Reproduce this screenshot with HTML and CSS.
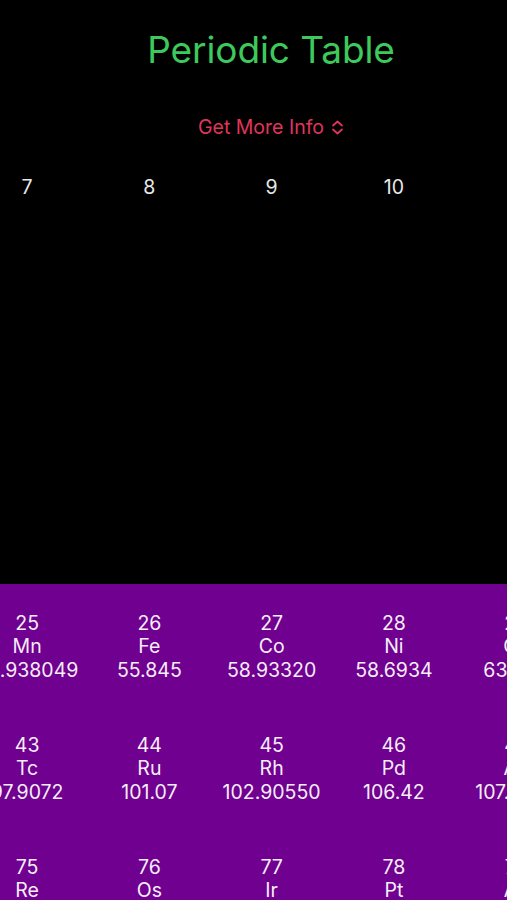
FILE: index.html
```html
<!DOCTYPE html>
<html lang="en">
<head>
<meta charset="utf-8">
<title>Periodic Table</title>
<link rel="stylesheet" href="styles.css">
</head>
<body>
<div class="page">
  <h1 class="title">Periodic Table</h1>
  <div class="info">
    <button class="info-btn" type="button">Get More Info
      <svg class="chev" width="13" height="15" viewBox="0 0 13 15" aria-hidden="true">
        <path d="M2 5.5 L6.5 1.5 L11 5.5 M2 9.5 L6.5 13.5 L11 9.5" fill="none" stroke="currentColor" stroke-width="1.8" stroke-linecap="round" stroke-linejoin="round"/>
      </svg>
    </button>
  </div>
  <div class="table">
    <div class="row head">
      <div class="cell">7</div>
      <div class="cell">8</div>
      <div class="cell">9</div>
      <div class="cell">10</div>
      <div class="cell">11</div>
    </div>
    <div class="row empty"></div>
    <div class="row empty"></div>
    <div class="row empty"></div>
    <div class="row filled">
      <div class="cell"><span>25</span><span>Mn</span><span>54.938049</span></div>
      <div class="cell"><span>26</span><span>Fe</span><span>55.845</span></div>
      <div class="cell"><span>27</span><span>Co</span><span>58.93320</span></div>
      <div class="cell"><span>28</span><span>Ni</span><span>58.6934</span></div>
      <div class="cell"><span>29</span><span>Cu</span><span>63.546</span></div>
    </div>
    <div class="row filled">
      <div class="cell"><span>43</span><span>Tc</span><span>97.9072</span></div>
      <div class="cell"><span>44</span><span>Ru</span><span>101.07</span></div>
      <div class="cell"><span>45</span><span>Rh</span><span>102.90550</span></div>
      <div class="cell"><span>46</span><span>Pd</span><span>106.42</span></div>
      <div class="cell"><span>47</span><span>Ag</span><span>107.8682</span></div>
    </div>
    <div class="row filled">
      <div class="cell"><span>75</span><span>Re</span><span>186.207</span></div>
      <div class="cell"><span>76</span><span>Os</span><span>190.23</span></div>
      <div class="cell"><span>77</span><span>Ir</span><span>192.217</span></div>
      <div class="cell"><span>78</span><span>Pt</span><span>195.078</span></div>
      <div class="cell"><span>79</span><span>Au</span><span>196.96655</span></div>
    </div>
  </div>
</div>
</body>
</html>
```
FILE: styles.css
```css
html, body {
  margin: 0;
  padding: 0;
  background: #000;
  overflow: hidden;
}
body {
  font-family: Inter, "Liberation Sans", sans-serif;
  color: #fff;
  width: 507px;
  height: 900px;
}
.page {
  width: 542px;
}
.title {
  margin: 0;
  height: 100px;
  line-height: 100px;
  text-align: center;
  font-size: 37px;
  font-weight: 400;
  color: #3dc95c;
  letter-spacing: -0.1px;
}
.info {
  height: 54px;
  display: flex;
  align-items: center;
  justify-content: center;
}
.info-btn {
  background: none;
  border: 0;
  padding: 0;
  font: inherit;
  font-size: 19.5px;
  color: #e0345c;
  display: flex;
  align-items: center;
  gap: 7px;
}
.chev {
  display: block;
}
.table {
  margin-left: -34px;
}
.row {
  display: grid;
  grid-template-columns: repeat(5, 122.25px);
  height: 122px;
}
.row.head {
  height: 64px;
}
.row.filled {
  background: #70008f;
}
.cell {
  display: flex;
  flex-direction: column;
  align-items: center;
  justify-content: center;
  padding-top: 4px;
  font-size: 19.5px;
  line-height: 23.5px;
  white-space: nowrap;
  color: #f6eef8;
}
.head .cell {
  color: #e8e8e8;
}
```
